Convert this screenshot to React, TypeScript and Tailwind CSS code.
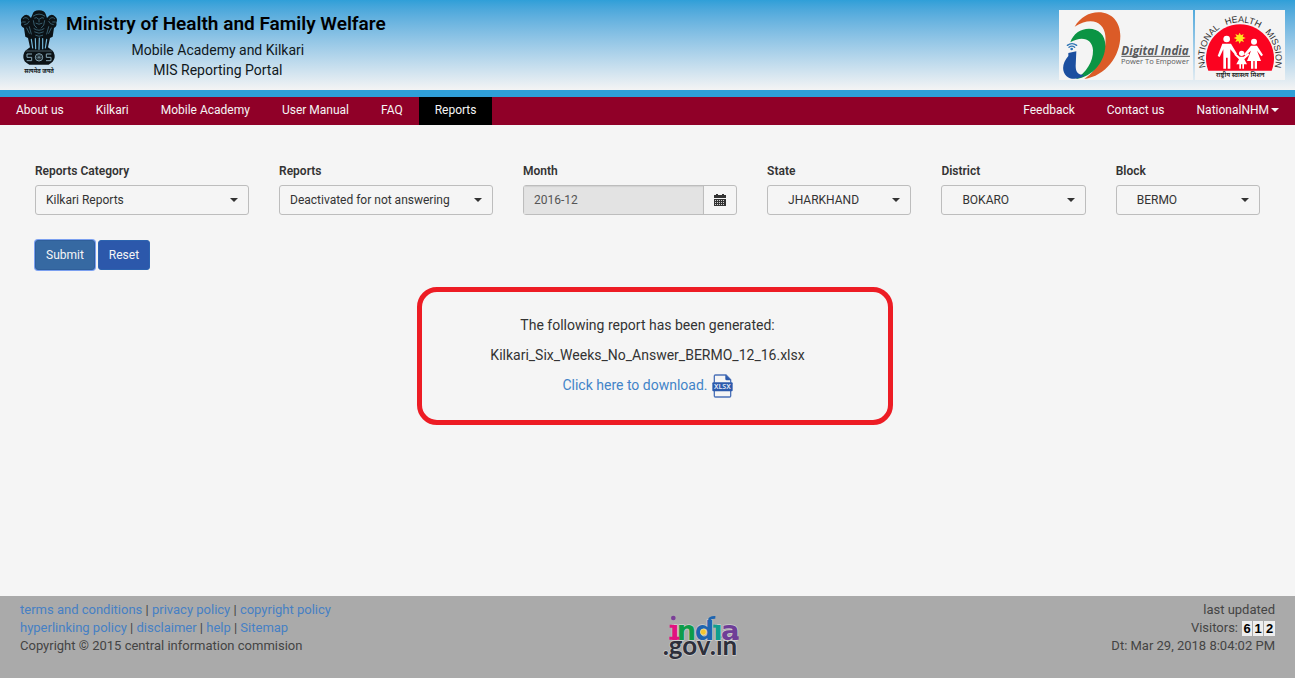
import React from "react";

const NAV = ["About us", "Kilkari", "Mobile Academy", "User Manual", "FAQ", "Reports"];

function Emblem() {
  return (
    <svg viewBox="0 0 114 192" className="h-16 w-[38px] shrink-0" role="img" aria-label="State Emblem of India">
      <g fill="#0b1216">
        <path d="M38 12 Q40 2 57 1 Q74 2 77 12 L81 24 Q94 6 106 20 Q114 26 109 38 Q112 48 102 54 L98 80 L90 84 L84 112 L92 118 Q104 124 104 142 Q102 156 86 164 L28 164 Q10 156 10 142 Q10 124 22 118 L30 112 L24 84 L16 80 L12 54 Q0 48 4 38 Q0 26 8 20 Q20 6 33 24 Z" />
      </g>
      <g fill="none" stroke="#76b9da" strokeWidth="3.5" strokeLinecap="round">
        <path d="M34 88 L38 114M46 86 L47 116M58 84 L57 118M68 86 L68 116M80 88 L76 114" />
      </g>
      <g fill="none" stroke="#4d8299" strokeWidth="2" strokeLinecap="round">
        <path d="M40 18 Q57 6 74 18M44 24 Q50 20 54 26M60 26 Q66 20 71 24M57 26 V36M48 40 Q57 46 66 40M40 32 Q40 48 50 54M74 32 Q74 48 64 54M42 56 Q57 66 72 56M44 66 Q57 74 70 66M47 76 Q57 82 68 76" />
        <path d="M10 26 Q18 18 26 28M8 36 H16M14 44 Q24 44 28 34M20 54 L28 70M28 50 L34 72M104 26 Q96 18 88 28M106 36 H98M100 44 Q90 44 86 34M94 54 L86 70M86 50 L80 72" />
      </g>
      <g fill="none" stroke="#86a7b6" strokeWidth="3">
        <circle cx="57" cy="142" r="11" />
        <path d="M57 132 V152M47 142 H67M50 135 L64 149M64 135 L50 149" strokeWidth="1.5" />
        <path d="M36 132 H21 V142 H35 V152 H20M94 132 H79 V142 H93 V152 H78" />
        <path d="M17 123 H97" strokeWidth="1.5" />
      </g>
      <text x="57" y="188" textAnchor="middle" fontSize="17" fontWeight="700" fill="#10181c" fontFamily="'Noto Sans', sans-serif">
        सत्यमेव जयते
      </text>
    </svg>
  );
}

function DigitalIndia() {
  return (
    <svg viewBox="0 0 402 210" className="h-[70px] w-[134px] bg-[#f4f4f4]" role="img" aria-label="Digital India, Power To Empower">
      <path d="M47 50 C64 22 90 7 119 7 C158 7 184 36 184 78 C184 139 139 198 76 207 C119 176 144 127 139 77 C135 37 98 18 47 50 Z" fill="#db5b27" />
      <path d="M34 97 C42 71 65 56 90 56 C119 56 139 75 139 106 C139 154 101 202 50 207 C81 189 103 155 102 121 C101 88 70 75 34 97 Z" fill="#0b9444" />
      <path d="M28 129 L52 124 L50 168 C50 186 57 195 76 195 C65 207 36 212 22 198 C7 182 10 158 28 138 Z" fill="#1b4fa0" />
      <g fill="none" stroke="#2e75b5" strokeWidth="4" strokeLinecap="round">
        <path d="M25 106 Q39 96 53 106M30 112 Q39 105 47 112" />
      </g>
      <circle cx="38" cy="117" r="4" fill="#2e75b5" />
      <text x="187" y="135" fontSize="35" fontWeight="700" fontStyle="italic" fill="#58595b" fontFamily="'Open Sans', sans-serif">Digital India</text>
      <path d="M187 139 H393" stroke="#58595b" strokeWidth="3" />
      <text x="186" y="161" fontSize="22.5" fill="#58595b" fontFamily="'Open Sans', sans-serif">Power To Empower</text>
    </svg>
  );
}

function HealthMission() {
  return (
    <svg viewBox="0 0 270 210" className="h-[70px] w-[90px] bg-[#f4f4f4]" role="img" aria-label="National Health Mission">
      <defs>
        <path id="arc" d="M42 197 A107 107 0 1 1 228 197" />
      </defs>
      <path d="M40 182 A102 102 0 1 1 230 182 Z" fill="#fb0320" />
      <g fontSize="27" fill="#303030" fontFamily="'Liberation Sans', sans-serif">
        <text><textPath href="#arc" startOffset="6%">NATIONAL</textPath></text>
        <text textAnchor="middle"><textPath href="#arc" startOffset="52%">HEALTH</textPath></text>
        <text textAnchor="end"><textPath href="#arc" startOffset="94%">MISSION</textPath></text>
      </g>
      <path d="M134 68 L138 76 L146 72 L143 80 L152 84 L143 88 L147 96 L138 93 L134 101 L130 93 L121 96 L125 88 L116 84 L125 80 L121 72 L130 76 Z" fill="#ffe51f" />
      <g fill="#fff">
        <circle cx="95" cy="87" r="10" />
        <path d="M82 101 H108 L126 131 L121 135 L106 118 V176 H98 V143 H93 V176 H85 V118 L74 141 L68 138 Z" />
        <circle cx="177" cy="95" r="9" />
        <path d="M168 107 H186 L204 135 L199 139 L186 122 L198 153 H186 V176 H179 V153 H175 V176 H168 V153 H156 L168 122 L151 137 L147 133 Z" />
        <circle cx="140" cy="130" r="8" />
        <path d="M134 140 H146 L160 130 L163 134 L148 148 L156 163 H147 V176 H142 V163 H138 V176 H133 V163 H124 L132 148 L118 134 L121 130 Z" />
      </g>
      <text x="136" y="202" textAnchor="middle" fontSize="19" fontWeight="600" fill="#222" fontFamily="'Noto Sans', sans-serif">राष्ट्रीय स्वास्थ्य मिशन</text>
    </svg>
  );
}

function Caret({ className }: { className: string }) {
  return (
    <svg viewBox="0 0 8 4" className={className} aria-hidden="true">
      <path d="M0 0 H8 L4 4 Z" fill="currentColor" />
    </svg>
  );
}

function CalendarIcon() {
  return (
    <svg viewBox="0 0 12 12" className="h-3 w-3" aria-hidden="true">
      <path d="M0 1 H2 V0 H4 V1 H8 V0 H10 V1 H12 V4 H0 Z M0 5 H12 V12 H0 Z" fill="#333" />
      <path d="M1 6h1v1h-1zM3 6h1v1h-1zM5 6h1v1h-1zM7 6h1v1h-1zM9 6h1v1h-1zM1 8h1v1h-1zM3 8h1v1h-1zM5 8h1v1h-1zM7 8h1v1h-1zM9 8h1v1h-1zM1 10h1v1h-1zM3 10h1v1h-1zM5 10h1v1h-1zM7 10h1v1h-1zM9 10h1v1h-1z" fill="#d0d0d0" />
    </svg>
  );
}

function XlsxIcon() {
  return (
    <svg viewBox="0 0 63 72" className="h-6 w-[21px]" aria-hidden="true">
      <path d="M7 26 V6 Q7 3 10 3 H42 L56 17 V26M7 50 V66 Q7 69 10 69 H53 Q56 69 56 66 V50" fill="none" stroke="#4c72b8" strokeWidth="4" />
      <path d="M40 2 L57 19 H44 Q40 19 40 15 Z" fill="#2c5aac" />
      <rect x="1" y="25" width="61" height="27" rx="3" fill="#2c5aac" />
      <text x="31" y="46" textAnchor="middle" fontSize="21" fontWeight="600" fill="#e9eef8" fontFamily="'Noto Sans', sans-serif">XLSX</text>
    </svg>
  );
}

function IndiaGov() {
  return (
    <svg viewBox="0 0 228 150" className="h-[50px] w-[76px] overflow-visible" role="img" aria-label="india.gov.in">
      <g stroke="#cfcfcf" strokeWidth="4" paintOrder="stroke" strokeLinejoin="round">
        <text x="-4" y="118" fontSize="78" fontWeight="700" fontFamily="Lato, sans-serif" fill="#2d2f3b">.gov.in</text>
        <g fontSize="82" fontWeight="700" fontFamily="'DejaVu Sans', sans-serif">
          <text x="18" y="71" fill="#e2127f">ı</text>
          <text x="38" y="71" fill="#0e9b49">n</text>
          <text x="92" y="71" fill="#1f65b0">d</text>
          <text x="148" y="71" fill="#109e8e">ı</text>
          <text x="171" y="71" fill="#6f3d97">a</text>
        </g>
      </g>
      <path d="M17 26 H30 V35 H17ZM16 62 H46 V71 H16Z" fill="#e2127f" />
      <path d="M148 26 H160 V35 H148Z" fill="#109e8e" />
      <path d="M214 61 H224 V71 H210Z" fill="#6f3d97" />
      <circle cx="28" cy="6" r="7" fill="#7b3f98" />
      <path d="M136 12 Q138 3 154 4" fill="none" stroke="#1f65b0" strokeWidth="8" />
      <circle cx="118" cy="48" r="9" fill="#f4c430" stroke="#f2e6a8" strokeWidth="2" />
    </svg>
  );
}

function SelectField({ id, label, value, indent = false }: { id: string; label: string; value: string; indent?: boolean }) {
  return (
    <div className="px-[15px]">
      <label htmlFor={id} className="mb-[5px] block leading-[18px] font-semibold">
        {label}
      </label>
      <div className="relative">
        <select
          id={id}
          defaultValue={value}
          className={
            "h-[30px] w-full appearance-none rounded-[3px] border border-[#bdbdbd] bg-[#f5f5f5] pr-6 " +
            (indent ? "pl-5" : "pl-2.5")
          }
        >
          <option>{value}</option>
        </select>
        <Caret className="pointer-events-none absolute top-[13px] right-[11px] h-1 w-2" />
      </div>
    </div>
  );
}

function FooterLink({ children }: { children: string }) {
  return (
    <a href="#" className="text-[#4680c4]">
      {children}
    </a>
  );
}

export default function App() {
  return (
    <div className="flex min-h-screen flex-col bg-[#f5f5f5] font-[Roboto,sans-serif] text-xs text-[#333]">
      <header className="flex items-start justify-between border-b-[7px] border-[#2f9fd8] bg-linear-to-b from-[#2f9fd8] to-[#f4f4f4] px-2.5 py-2.5">
        <div className="flex pl-2.5">
          <Emblem />
          <div className="pt-0.5 pl-2 text-center text-black">
            <h1 className="text-[19px] leading-6 font-semibold">Ministry of Health and Family Welfare</h1>
            <div className="mt-1 pr-4 text-sm leading-5 text-[#10181c]">
              <p>Mobile Academy and Kilkari</p>
              <p>MIS Reporting Portal</p>
            </div>
          </div>
        </div>
        <div className="flex gap-0.5">
          <DigitalIndia />
          <HealthMission />
        </div>
      </header>

      <nav className="flex justify-between bg-[#900028] leading-[18px] text-[#f5f5f5]">
        <div className="flex">
          {NAV.map((item) => (
            <a key={item} href="#" className={"px-4 pt-1 pb-1.5 " + (item === "Reports" ? "bg-black" : "")}>
              {item}
            </a>
          ))}
        </div>
        <div className="flex">
          <a href="#" className="px-4 pt-1 pb-1.5">Feedback</a>
          <a href="#" className="px-4 pt-1 pb-1.5">Contact us</a>
          <button type="button" className="flex items-center gap-0.5 px-4 pt-1 pb-1.5">
            NationalNHM
            <Caret className="h-1 w-2" />
          </button>
        </div>
      </nav>

      <main className="flex-1 pt-[37px]">
        <form onSubmit={(e) => e.preventDefault()}>
          <div className="grid grid-cols-[7fr_7fr_7fr_5fr_5fr_5fr] px-5">
            <SelectField id="category" label="Reports Category" value="Kilkari Reports" />
            <SelectField id="report" label="Reports" value="Deactivated for not answering" />
            <div className="px-[15px]">
              <label htmlFor="month" className="mb-[5px] block leading-[18px] font-semibold">
                Month
              </label>
              <div className="flex h-[30px] rounded-[3px] border border-[#bdbdbd]">
                <input
                  id="month"
                  readOnly
                  defaultValue="2016-12"
                  className="min-w-0 flex-1 bg-[#e3e3e3] px-2.5 text-[#555] shadow-[inset_0_1px_1px_rgba(0,0,0,0.08)]"
                />
                <button type="button" aria-label="Choose month" className="flex w-[33px] items-center justify-center border-l border-[#bdbdbd]">
                  <CalendarIcon />
                </button>
              </div>
            </div>
            <SelectField id="state" label="State" value="JHARKHAND" indent />
            <SelectField id="district" label="District" value="BOKARO" indent />
            <SelectField id="block" label="Block" value="BERMO" indent />
          </div>
          <div className="mt-[25px] flex gap-[3px] px-[35px] text-[#f5f5f5]">
            <button type="submit" className="h-[30px] rounded-[3px] border border-[#2f5f9b] bg-[#3669a2] px-2.5 ring-1 ring-[#7ba0f0]">
              Submit
            </button>
            <button type="reset" className="h-[30px] rounded-[3px] border border-[#2d64b0] bg-[#2c58ab] px-2.5">
              Reset
            </button>
          </div>
        </form>

        <div className="mt-[17px] flex justify-center pl-[15px]">
          <section className="w-[476px] rounded-[20px] border-[5px] border-[#ed1c24] pt-[23px] pr-[15px] pb-[22px] text-center text-sm leading-5">
            <p>The following report has been generated:</p>
            <p className="mt-2.5">Kilkari_Six_Weeks_No_Answer_BERMO_12_16.xlsx</p>
            <a href="#" className="mt-[9px] inline-flex gap-1 text-[#4284c8]">
              <span className="pt-px">Click here to download.</span>
              <XlsxIcon />
            </a>
          </section>
        </div>
      </main>

      <footer className="flex bg-[#aaa] px-5 pt-[5px] pb-3 text-[13px] leading-[18px] text-[#444]">
        <div className="w-1/2">
          <p>
            <FooterLink>terms and conditions</FooterLink> | <FooterLink>privacy policy</FooterLink> | <FooterLink>copyright policy</FooterLink>
          </p>
          <p>
            <FooterLink>hyperlinking policy</FooterLink> | <FooterLink>disclaimer</FooterLink> | <FooterLink>help</FooterLink> | <FooterLink>Sitemap</FooterLink>
          </p>
          <p>Copyright © 2015 central information commision</p>
        </div>
        <div className="ml-4 pt-[15px]">
          <IndiaGov />
        </div>
        <div className="ml-auto text-right">
          <p>last updated</p>
          <p className="flex items-center justify-end gap-1">
            Visitors:
            <span className="flex divide-x divide-[#aaa] text-black">
              {["6", "1", "2"].map((digit) => (
                <b key={digit} className="w-[11px] bg-[#eee] text-center font-['Liberation_Sans',sans-serif] leading-[15px]">
                  {digit}
                </b>
              ))}
            </span>
          </p>
          <p>Dt: Mar 29, 2018 8:04:02 PM</p>
        </div>
      </footer>
    </div>
  );
}
